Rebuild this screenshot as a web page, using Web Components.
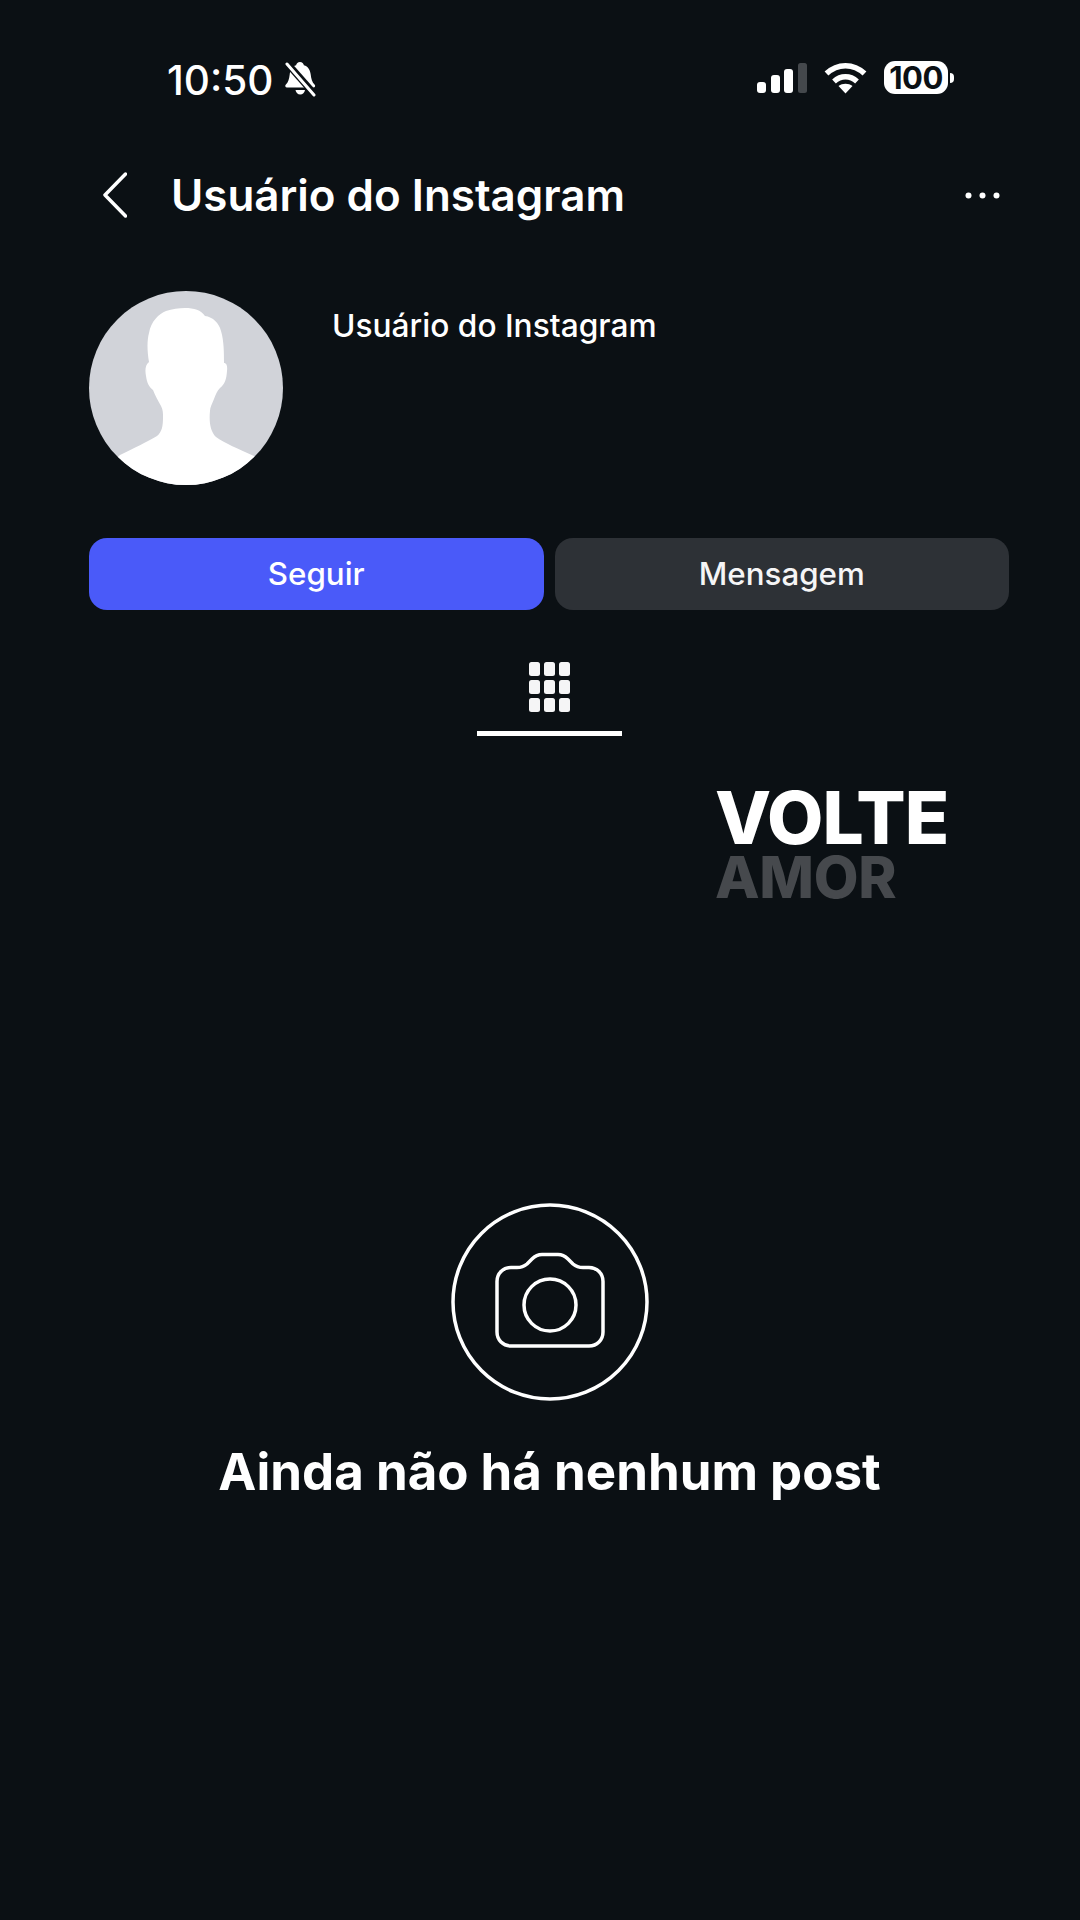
<!DOCTYPE html>
<html lang="pt">
<head>
<meta charset="utf-8">
<title>Usuário do Instagram</title>
<style>
  html, body { margin: 0; background: #0b1014; }
  body {
    width: 1080px;
    height: 1920px;
    overflow: hidden;
    color: #fff;
    font-family: Inter, "Liberation Sans", sans-serif;
  }
</style>
</head>
<body>
<status-bar></status-bar>
<nav-header>Usuário do Instagram</nav-header>
<profile-info>Usuário do Instagram</profile-info>
<profile-actions>
  <action-button primary>Seguir</action-button>
  <action-button>Mensagem</action-button>
</profile-actions>
<profile-tabs></profile-tabs>
<brand-mark></brand-mark>
<empty-state>Ainda não há nenhum post</empty-state>

<script>
// Small helper so each element only declares its style and markup
class ShadowElement extends HTMLElement {
  static style = '';
  static markup = '';

  constructor() {
    super();
    this.attachShadow({ mode: 'open' });
    this.shadowRoot.innerHTML = `<style>${this.constructor.style}</style>${this.constructor.markup}`;
  }
}

class StatusBar extends ShadowElement {
  static style = `
    :host {
      display: flex;
      align-items: flex-start;
      height: 150px;
      padding: 61px 126px 0 167px;
      box-sizing: border-box;
    }
    .time {
      font: 500 40.500px/38px Inter, sans-serif;
      margin-top: 1px;
      margin-right: 11px;
    }
    svg { display: block; }
    .spacer { flex: 1; }
    .signal { margin-top: 2px; margin-right: 17px; }
    .wifi { margin-top: 1px; margin-right: 17px; }
    .battery {
      display: flex;
      align-items: center;
      gap: 2px;
    }
    .cell {
      width: 64px;
      height: 33px;
      border-radius: 11px;
      background: #fff;
      color: #0b1014;
      font: 700 31px/33px Inter, sans-serif;
      letter-spacing: -0.5px;
      text-align: center;
    }
    .nub {
      width: 4px;
      height: 10px;
      border-radius: 0 4px 4px 0;
      background: #fff;
    }
  `;
  static markup = `
    <span class="time">10:50</span>
    <svg width="33" height="36" viewBox="0 0 33 36">
      <path fill="#fff" d="M16 1c2.200 0 3.500 1.300 3.900 3.200 4.300 1.300 6.300 4.800 6.800 9.300.5 4.400 1.300 7.500 4 10.300.9 1 .4 2.700-1.300 2.700H3c-1.700 0-2.200-1.700-1.300-2.700 2.700-2.800 3.500-5.900 4-10.300.5-4.500 2.200-8 6.400-9.300C12.500 2.300 13.800 1 16 1z"/>
      <path fill="#fff" d="M11.500 29h9.500c-.4 2.700-2.300 4.500-4.750 4.500S11.900 31.700 11.500 29z"/>
      <path stroke="#0b1014" stroke-width="7" d="M2 1l30 34"/>
      <path stroke="#fff" stroke-width="3" stroke-linecap="round" d="M3 3l27 31"/>
    </svg>
    <span class="spacer"></span>
    <svg class="signal" width="50" height="30" viewBox="0 0 50 30">
      <rect x="0" y="19" width="9" height="11" rx="3" fill="#fff"/>
      <rect x="14" y="12" width="9" height="18" rx="3" fill="#fff"/>
      <rect x="27" y="6" width="9" height="24" rx="3" fill="#fff"/>
      <rect x="41" y="0" width="9" height="30" rx="2.500" fill="#44484c"/>
    </svg>
    <svg class="wifi" width="43" height="32" viewBox="0 0 43 32">
      <path fill="none" stroke="#fff" stroke-width="5.500" d="M2.500 11.500C13.500 1 29.500 1 40.500 11.500"/>
      <path fill="none" stroke="#fff" stroke-width="5.500" d="M10 19.500c6.800-6.200 16.200-6.200 23 0"/>
      <path fill="#fff" d="M21.500 31.500 14.500 24c4-3 10-3 14 0z"/>
    </svg>
    <span class="battery"><span class="cell">100</span><span class="nub"></span></span>
  `;
}

class NavHeader extends ShadowElement {
  static style = `
    :host {
      display: flex;
      align-items: center;
      height: 90px;
      padding: 0 80px 0 103px;
      box-sizing: border-box;
    }
    svg { display: block; flex: none; }
    .title {
      flex: 1;
      margin-left: 44px;
      font: 600 43.900px/50px Inter, sans-serif;
    }
  `;
  static markup = `
    <svg width="24" height="46" viewBox="0 0 24 46">
      <path fill="none" stroke="#fff" stroke-width="3.500" stroke-linecap="round" stroke-linejoin="round" d="M22.500 2 2 23l20.500 21"/>
    </svg>
    <span class="title"><slot></slot></span>
    <svg width="35" height="7" viewBox="0 0 35 7">
      <circle cx="3.500" cy="3.500" r="3" fill="#fff"/>
      <circle cx="17.500" cy="3.500" r="3" fill="#fff"/>
      <circle cx="31.500" cy="3.500" r="3" fill="#fff"/>
    </svg>
  `;
}

class ProfileInfo extends ShadowElement {
  static style = `
    :host {
      display: flex;
      align-items: flex-start;
      gap: 49px;
      padding: 51px 0 0 89px;
    }
    svg { display: block; flex: none; }
    .name {
      margin-top: 17px;
      font: 500 31.700px/36px Inter, sans-serif;
    }
  `;
  static markup = `
    <svg width="194" height="194" viewBox="0 0 194 194">
      <defs><clipPath id="disc"><circle cx="97" cy="97" r="97"/></clipPath></defs>
      <circle cx="97" cy="97" r="97" fill="#d1d3d9"/>
      <path clip-path="url(#disc)" fill="#fff" d="M96 17C105 17 112 19 116 25C124 26 130 32 132 40C135 50 135 62 135 72C138 72 138.500 76 138 80C137.500 88 136 93 131 97C128 100 127 103 125 108C123 113 121 116 121 120C120 130 121 140 127 146C135 152 150 158 165 165L194 194L0 194L31 164C45 157 58 151 68 145C73 141 74 135 74 126C74 122 74 119 72 115C69 110 66 104 64 99C60 96 58 92 57 85C56 80 56 74 60 71C58 60 58 49 60 42C62 30 70 23 77 20C83 18 90 17 96 17Z"/>
    </svg>
    <span class="name"><slot></slot></span>
  `;
}

class ProfileActions extends ShadowElement {
  static style = `
    :host {
      display: grid;
      grid-template-columns: 1fr 1fr;
      gap: 11px;
      width: 920px;
      margin: 53px 0 0 89px;
    }
  `;
  static markup = `<slot></slot>`;
}

class ActionButton extends ShadowElement {
  static style = `
    :host {
      display: flex;
      align-items: center;
      justify-content: center;
      height: 72px;
      border-radius: 18px;
      background: #2d3136;
      color: #f5f5f6;
      font: 500 31.300px/36px Inter, sans-serif;
    }
    :host([primary]) { background: #4a5af9; color: #fff; }
  `;
  static markup = `<slot></slot>`;
}

class ProfileTabs extends ShadowElement {
  static style = `
    :host {
      display: flex;
      justify-content: center;
      margin-top: 52px;
      padding-left: 19px;
    }
    .tab {
      display: flex;
      justify-content: center;
      width: 145px;
      height: 74px;
      box-sizing: border-box;
      border-bottom: 5px solid #fff;
    }
    svg { display: block; }
  `;
  static markup = `
    <div class="tab">
      <svg width="42" height="50" viewBox="0 0 42 50" fill="#f5f5f6">
        <rect x="0" y="0" width="11" height="14" rx="2.500"/><rect x="15" y="0" width="11" height="14" rx="2.500"/><rect x="30" y="0" width="11" height="14" rx="2.500"/>
        <rect x="0" y="18" width="11" height="14" rx="2.500"/><rect x="15" y="18" width="11" height="14" rx="2.500"/><rect x="30" y="18" width="11" height="14" rx="2.500"/>
        <rect x="0" y="36" width="11" height="14" rx="2.500"/><rect x="15" y="36" width="11" height="14" rx="2.500"/><rect x="30" y="36" width="11" height="14" rx="2.500"/>
      </svg>
    </div>
  `;
}

class BrandMark extends ShadowElement {
  static style = `
    :host {
      display: flex;
      flex-direction: column;
      align-items: flex-start;
      padding: 52px 0 0 715px;
    }
    .top {
      font: 800 73px/60px Inter, sans-serif;
      letter-spacing: -1px;
      color: #fff;
      height: 60px;
    }
    .bottom {
      font: 800 58px/50px Inter, sans-serif;
      letter-spacing: -0.3px;
      color: #46494d;
      height: 50px;
      margin-top: 4px;
    }
  `;
  static markup = `<span class="top">VOLTE</span><span class="bottom">AMOR</span>`;
}

class EmptyState extends ShadowElement {
  static style = `
    :host {
      display: flex;
      flex-direction: column;
      align-items: center;
      margin-top: 300px;
      padding-left: 19px;
    }
    svg { display: block; }
    .label {
      margin-top: 40px;
      font: 700 51px/60px Inter, sans-serif;
    }
  `;
  static markup = `
    <svg width="200" height="200" viewBox="0 0 200 200" fill="none" stroke="#fff" stroke-width="3.500">
      <circle cx="100" cy="100" r="97"/>
      <path stroke-linejoin="round" d="M61 65.500h6c4 0 7-1 10-3.500l5-5c3-3 6-4.500 10-4.500h16c4 0 7 1.500 10 4.500l5 5c3 2.500 6 3.500 10 3.500h6c8 0 14 6 14 14v50.500c0 8-6 14-14 14H61c-8 0-14-6-14-14V79.500c0-8 6-14 14-14z"/>
      <circle cx="100" cy="103" r="26"/>
    </svg>
    <span class="label"><slot></slot></span>
  `;
}

customElements.define('status-bar', StatusBar);
customElements.define('nav-header', NavHeader);
customElements.define('profile-info', ProfileInfo);
customElements.define('profile-actions', ProfileActions);
customElements.define('action-button', ActionButton);
customElements.define('profile-tabs', ProfileTabs);
customElements.define('brand-mark', BrandMark);
customElements.define('empty-state', EmptyState);
</script>
</body>
</html>
